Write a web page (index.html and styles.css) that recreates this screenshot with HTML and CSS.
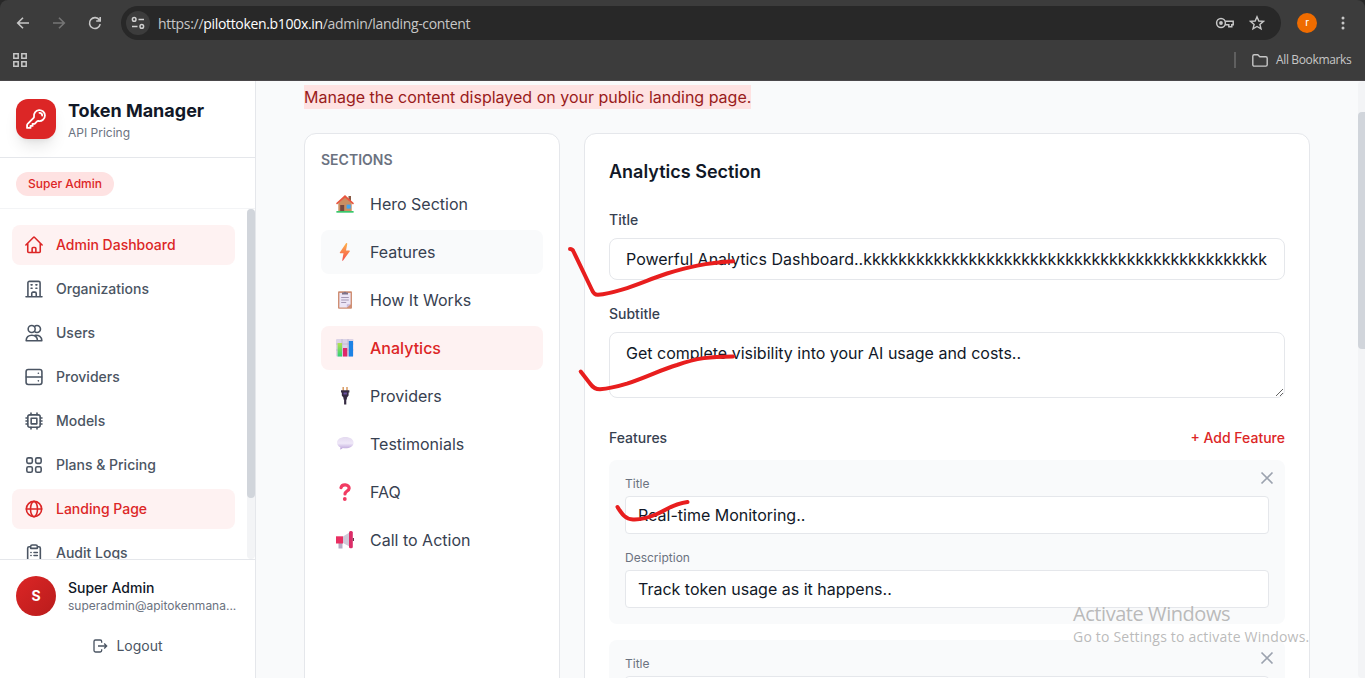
FILE: index.html
```html
<!DOCTYPE html>
<html lang="en">
<head>
<meta charset="utf-8">
<title>Token Manager</title>
<link rel="stylesheet" href="styles.css">
</head>
<body>
<div class="browser">
  <div class="toolbar">
    <svg class="nav-btn" viewBox="0 0 16 16"><path d="M14 8H3M8 2.7 2.7 8 8 13.3"/></svg>
    <svg class="nav-btn off" viewBox="0 0 16 16"><path d="M2 8h11M8 2.7 13.3 8 8 13.3"/></svg>
    <svg class="nav-btn" viewBox="0 0 16 16"><path d="M13.2 9.2A5.4 5.4 0 1 1 12.4 5M13.2 2v4H9.2"/></svg>
    <div class="address">
      <span class="site-info"><svg viewBox="0 0 16 16"><circle cx="4.2" cy="4.4" r="1.8"/><path d="M8.5 4.4H14M2 11.4h5.5"/><circle cx="11.8" cy="11.4" r="1.8"/></svg></span>
      <span class="url">https://<b>pilottoken.b100x.in</b>/admin/landing-content</span>
      <svg class="key" viewBox="0 0 20 14"><circle cx="6" cy="7" r="4.4"/><circle class="dot" cx="6" cy="7" r="1.9"/><path d="M10.2 5.2h8v3.6h-1.4v2h-3v-2h-3.6"/></svg>
      <svg class="star" viewBox="0 0 16 16"><path d="m8 1.8 1.8 4.2 4.6.4-3.5 3 1.1 4.5L8 11.5l-4 2.4 1.1-4.5-3.5-3 4.6-.4z"/></svg>
    </div>
    <span class="profile">r</span>
    <svg class="dots" viewBox="0 0 4 16"><circle cx="2" cy="3" r="1.5"/><circle cx="2" cy="8" r="1.5"/><circle cx="2" cy="13" r="1.5"/></svg>
  </div>
  <div class="bookmarks">
    <svg class="apps" viewBox="0 0 14 14"><path d="M.8.8h4.4v4.4H.8zM8.8.8h4.4v4.4H8.8zM.8 8.8h4.4v4.4H.8zM8.8 8.8h4.4v4.4H8.8z"/></svg>
    <span class="divider"></span>
    <svg class="folder" viewBox="0 0 16 13"><path d="M.8 10.7V2.3C.8 1.4 1.4.8 2.2.8h3.6l2 2h6c.8 0 1.4.6 1.4 1.4v6.5c0 .8-.6 1.4-1.4 1.4H2.2c-.8 0-1.4-.6-1.4-1.4z"/></svg>
    <span class="all">All Bookmarks</span>
  </div>
</div>

<div class="app">
  <aside class="sidebar">
    <div class="brand">
      <div class="logo"><svg viewBox="0 0 24 24"><path d="M15.75 5.25a3 3 0 0 1 3 3m3 0a6 6 0 0 1-7.029 5.912c-.563-.097-1.159.026-1.563.43L10.5 17.25H8.25v2.25H6v2.25H2.25v-2.818c0-.597.237-1.17.659-1.591l6.499-6.499c.404-.404.527-1 .43-1.563A6 6 0 1 1 21.75 8.25Z"/></svg></div>
      <div><div class="brand-name">Token Manager</div><div class="brand-sub">API Pricing</div></div>
    </div>
    <div class="role"><span class="badge">Super Admin</span></div>
    <div class="nav-wrap">
      <nav class="nav">
        <a class="item active"><svg viewBox="0 0 24 24"><path d="m2.25 12 8.954-8.955c.44-.439 1.152-.439 1.591 0L21.75 12M4.5 9.75v10.125c0 .621.504 1.125 1.125 1.125H9.75v-4.875c0-.621.504-1.125 1.125-1.125h2.25c.621 0 1.125.504 1.125 1.125V21h4.125c.621 0 1.125-.504 1.125-1.125V9.75M8.25 21h8.25"/></svg>Admin Dashboard</a>
        <a class="item"><svg viewBox="0 0 24 24"><path d="M2.4 21.2h19.2M4.7 21V4.6c0-1 .8-1.8 1.8-1.8h11c1 0 1.8.8 1.8 1.8V21M8.5 7h1.2M14.3 7h1.2M8.5 11h1.2M14.3 11h1.2M9.3 21v-3.6c0-1 .7-1.7 1.6-1.7h2.2c.9 0 1.6.7 1.6 1.7V21"/></svg>Organizations</a>
        <a class="item"><svg viewBox="0 0 24 24"><circle cx="9.2" cy="7.2" r="4.2"/><path d="M12.6 4.3a4.2 4.2 0 1 1 0 5.9M2.6 21.2c0-4 2.8-6.6 6.8-6.6s6.8 2.6 6.8 6.6zM13.4 14.8c4.4-.8 8 2.2 8 6.4h-5"/></svg>Users</a>
        <a class="item"><svg viewBox="0 0 24 24"><rect x="2.5" y="3" width="19" height="18" rx="2.6"/><path d="M2.8 12h18.4M17.2 7.4h.1M17.2 16.6h.1"/></svg>Providers</a>
        <a class="item"><svg viewBox="0 0 24 24"><rect x="4.6" y="4.6" width="14.8" height="14.8" rx="2.4"/><rect x="8.6" y="8.6" width="6.8" height="6.8"/><path d="M8.4 2.4v2M15.6 2.4v2M8.4 19.6v2M15.6 19.6v2M2.4 8.4h2M2.4 15.6h2M19.6 8.4h2M19.6 15.6h2M2.4 12h2M19.6 12h2"/></svg>Models</a>
        <a class="item"><svg viewBox="0 0 24 24"><rect x="3.4" y="3.4" width="6.6" height="6.6" rx="1.8"/><rect x="14" y="3.4" width="6.6" height="6.6" rx="1.8"/><rect x="3.4" y="14" width="6.6" height="6.6" rx="1.8"/><rect x="14" y="14" width="6.6" height="6.6" rx="1.8"/></svg>Plans &amp; Pricing</a>
        <a class="item active"><svg viewBox="0 0 24 24"><circle cx="12" cy="12" r="9.2"/><ellipse cx="12" cy="12" rx="4.2" ry="9.2"/><path d="M2.8 12h18.4"/></svg>Landing Page</a>
        <a class="item"><svg viewBox="0 0 24 24"><path d="M8 4.4H6.2c-1 0-1.8.8-1.8 1.8v13.6c0 1 .8 1.8 1.8 1.8h11.6c1 0 1.8-.8 1.8-1.8V6.2c0-1-.8-1.8-1.8-1.8H16M8 6.4V4.2c0-1 .8-1.8 1.8-1.8h4.4c1 0 1.8.8 1.8 1.8v2.2zM8.3 11.4h.2M12 11.4h4M8.3 15h.2M12 15h4"/></svg>Audit Logs</a>
      </nav>
      <div class="nav-track"><div class="nav-thumb"></div></div>
    </div>
    <div class="account">
      <div class="user">
        <div class="avatar">S</div>
        <div class="user-text"><div class="user-name">Super Admin</div><div class="user-mail">superadmin@apitokenmana...</div></div>
      </div>
      <div class="logout"><svg viewBox="0 0 24 24"><path d="M14.5 7V5.2c0-1.3-1-2.2-2.2-2.2H5.2C4 3 3 4 3 5.2v13.6C3 20 4 21 5.2 21h7.1c1.2 0 2.2-1 2.2-2.2V17M9 12h13M18.3 8.2 22 12l-3.7 3.8"/></svg>Logout</div>
    </div>
  </aside>

  <main class="main">
    <p class="intro"><span>Manage the content displayed on your public landing page.</span></p>
    <div class="columns">
      <section class="card sections">
        <h3>SECTIONS</h3>
        <a class="sec"><svg viewBox="0 0 18 18"><path fill="#8a5a45" d="M12.5 1H15v5h-2.500z"/><path fill="#c98f62" d="M2.300 8 9 2l6.700 6v9H2.300z"/><path fill="#e8563f" d="M9 0 0 8.200l1 1.200L9 2.800l8 6.600 1-1.200z"/><path fill="#76483f" d="M4.200 10h4v7h-4z"/><path fill="#40a6ef" d="M10.600 9.600h4.200v4h-4.200z"/><path fill="#38c76b" d="M.4 16h17.200v1.700H.4z"/></svg>Hero Section</a>
        <a class="sec hover"><svg viewBox="0 0 18 18"><defs><linearGradient id="bolt" x2="0" y2="1"><stop stop-color="#ffb24c"/><stop offset="1" stop-color="#f4504c"/></linearGradient></defs><path fill="url(#bolt)" d="M10 .3 3.800 9.400c-.2.400 0 .8.400.8h3.300L6.200 17.500c0 .4.400.5.700.2l6.800-9.300c.3-.4.100-.9-.4-.9H10L11.300.8C11.400.2 10.400-.2 10 .3z"/></svg>Features</a>
        <a class="sec"><svg viewBox="0 0 18 18"><rect x="2" y=".3" width="14" height="17.500" rx="1" fill="#cf8f74"/><path fill="#ece5f5" d="M3.400 2h11.200v11.200l-3.800 3.400H3.400z"/><path fill="#c9b9dc" d="M14.600 13.200h-3.800v3.400z"/><path fill="#7d7188" d="M6 3.600V1.600h1.800a1.300 1.300 0 0 1 2.400 0H12v2z"/><path stroke="#a497b3" d="M5.200 6.500h7.600M5.200 9h7.600M5.200 11.500h5"/></svg>How It Works</a>
        <a class="sec current"><svg viewBox="0 0 18 18"><defs><linearGradient id="bar" x2="0" y2="1"><stop stop-color="#b4e34c"/><stop offset="1" stop-color="#2fcf78"/></linearGradient></defs><rect width="17.500" height="17.500" rx="1" fill="#dbd3e6"/><path stroke="#b7adc6" stroke-width=".6" d="M0 5h17.500M0 11h17.500M6 0v17.500M12 0v17.500"/><path fill="url(#bar)" d="M1.600 4H6v13.500H1.600z"/><path fill="#df2869" d="M7 9h4.200v8.500H7z"/><path fill="#1d83e5" d="M12.800 2H17v15.500h-4.200z"/></svg>Analytics</a>
        <a class="sec"><svg viewBox="0 0 18 18"><path stroke="#d99b62" stroke-width="1.500" d="M7.200 0v4M11 0v4"/><path fill="#352b42" d="M5 3.200h8.400v2.300h-.8v3l-1.700 2.300v1.700h-.6v5H8.100v-5h-.6v-1.700L5.800 8.500v-3H5z"/><path stroke="#6b52a0" stroke-width="2" d="M7.500 6.500h3.400"/></svg>Providers</a>
        <a class="sec"><svg viewBox="0 0 18 18"><defs><linearGradient id="talk" x2="0" y2="1"><stop stop-color="#e4daf0"/><stop offset=".5" stop-color="#efe8f8"/><stop offset="1" stop-color="#b9a0d8"/></linearGradient></defs><path fill="url(#talk)" d="M9.300 2c4.800 0 8.300 2.400 8.300 5.700s-3.500 5.600-8.300 5.600c-.9 0-1.700-.1-2.500-.2-.6.700-1.600 1.400-2.900 1.500.5-.7.500-1.500.4-2.300C2.300 11.200 1 9.600 1 7.700 1 4.400 4.500 2 9.300 2z"/></svg>Testimonials</a>
        <a class="sec"><svg viewBox="0 0 18 18"><path fill="none" stroke="#f13b62" stroke-width="3.200" stroke-linecap="round" d="M5 4.700C5.400 2.500 7.400 1.700 9.300 1.800c2.200.1 3.900 1.500 3.800 3.500-.1 2.700-4.100 2.700-4.100 5.600"/><circle cx="8.800" cy="16" r="1.900" fill="#f13b62"/></svg>FAQ</a>
        <a class="sec"><svg viewBox="0 0 18 18"><path fill="#b4abc4" d="M2.500 11h4v6.500h-4z"/><path fill="#cfc9d8" d="m7 5.500 6.500-4v14L7 12z"/><path fill="#e92f62" d="M0 5.300h7v7.200H0z"/><rect x="13" y="0" width="3.800" height="17.300" rx="1.500" fill="#dc2c68"/><path fill="#6b3750" d="M16.800 7h1.200v3h-1.200z"/></svg>Call to Action</a>
      </section>

      <section class="card editor">
        <h2>Analytics Section</h2>
        <label class="lbl">Title</label>
        <input class="field" value="Powerful Analytics Dashboard..kkkkkkkkkkkkkkkkkkkkkkkkkkkkkkkkkkkkkkkkkkkkkk">
        <label class="lbl next">Subtitle</label>
        <textarea class="field area" rows="2">Get complete visibility into your AI usage and costs..</textarea>
        <div class="feat-head"><span>Features</span><span class="add">+ Add Feature</span></div>
        <div class="feature">
          <svg class="close" viewBox="0 0 20 20"><path d="m4.500 4.500 11 11m0-11-11 11"/></svg>
          <label>Title</label><input value="Real-time Monitoring..">
          <label class="second">Description</label><input value="Track token usage as it happens..">
        </div>
        <div class="feature">
          <svg class="close" viewBox="0 0 20 20"><path d="m4.500 4.500 11 11m0-11-11 11"/></svg>
          <label>Title</label><input value="">
        </div>
      </section>
    </div>
  </main>
  <div class="page-track"><div class="page-thumb"></div></div>
</div>

<svg class="ink" viewBox="0 0 1365 678"><path d="M570 249Q572.500 249 573.500 251.500L592 290Q594 295 598 294.800Q607 294 622 289.600C640 284 650 279 667 273.500C688 267 705 263 733 261.300"/><path d="M580.700 371.500 590 383.500Q594 389.300 600 389.300Q611 388.500 627 383.700C650 376 660 370 677 365C697 358 710 356.500 733 356.500"/><path d="M617.500 507C622 514 625 519 633 519.500C642 520 650 517 657 514C668 509 674 503.500 687.500 502"/></svg>
<div class="watermark"><div class="wm-title">Activate Windows</div><div class="wm-sub">Go to Settings to activate Windows.</div></div>
</body>
</html>
```
FILE: styles.css
```css
* { box-sizing: border-box; }
body { margin: 0; width: 1365px; height: 678px; overflow: hidden; background: #282828; font-family: Inter, "Liberation Sans", sans-serif; color: #111827; }
svg { display: block; flex: none; fill: none; }

.browser { height: 81px; background: #3c3c3c; border-bottom: 1px solid #4a474a; border-radius: 8px 8px 0 0; font-family: "Open Sans", "Noto Sans", sans-serif; color: #c7c7c7; }
.toolbar { display: flex; align-items: center; height: 40px; padding: 6px 20px 0 15px; }
.nav-btn { width: 16px; height: 16px; margin-right: 20px; stroke: #c7c7c7; stroke-width: 1.6; }
.nav-btn.off { stroke: #757575; }
.address { display: flex; align-items: center; width: 1160px; height: 34px; margin-left: -2px; padding: 0 16px 0 5px; border-radius: 17px; background: #282828; }
.site-info { display: flex; align-items: center; justify-content: center; width: 24px; height: 24px; border-radius: 50%; background: #3c3c3c; }
.site-info svg { width: 16px; height: 16px; stroke: #d0d0d0; stroke-width: 1.5; }
.url { flex: 1; margin-left: 8px; font-size: 14px; letter-spacing: -0.32px; white-space: nowrap; }
.url b { font-weight: 400; color: #fff; }
.key { width: 20px; height: 14px; margin-right: 14px; stroke: #c7c7c7; stroke-width: 1.5; }
.key .dot { fill: #c7c7c7; stroke: none; }
.star { width: 16px; height: 16px; stroke: #c7c7c7; stroke-width: 1.4; }
.profile { width: 20px; height: 20px; margin-left: 16px; border-radius: 50%; background: #ef6c00; color: #fff; font: 11px/19px Roboto, sans-serif; text-align: center; }
.dots { width: 4px; height: 16px; margin-left: 24px; fill: #c7c7c7; }
.bookmarks { display: flex; align-items: center; height: 40px; padding: 0 13px; }
.apps { width: 14px; height: 14px; stroke: #c7c7c7; stroke-width: 1.5; }
.divider { width: 2px; height: 16px; margin-left: auto; background: #5f5f5f; }
.folder { width: 16px; height: 13px; margin: 0 8px 0 16px; stroke: #c7c7c7; stroke-width: 1.4; }
.all { width: 76px; font-size: 12px; line-height: 16px; letter-spacing: -0.36px; white-space: nowrap; }

.app { display: flex; height: 597px; background: #f9fafb; }
.sidebar { display: flex; flex-direction: column; width: 256px; flex: none; background: #fff; border-right: 1px solid #e5e7eb; }
.brand { display: flex; flex: none; align-items: center; gap: 12px; height: 77px; padding: 0 16px; border-bottom: 1px solid #e5e7eb; }
.logo { display: flex; align-items: center; justify-content: center; width: 40px; height: 40px; border-radius: 12px; background: #dc2626; box-shadow: 0 10px 15px -3px #0000001a, 0 4px 6px -4px #0000001a; }
.logo svg { width: 22px; height: 22px; stroke: #fff; stroke-width: 2; stroke-linejoin: round; stroke-linecap: round; }
.brand-name { font-size: 18px; line-height: 28px; font-weight: 700; }
.brand-sub { font-size: 12px; line-height: 16px; color: #6b7280; }
.role { display: flex; flex: none; height: 51px; padding: 14px 16px 0; border-bottom: 1px solid #f3f4f6; }
.badge { height: 24px; padding: 4px 12px; border-radius: 12px; background: #fee2e2; color: #dc2626; font-size: 12px; line-height: 16px; font-weight: 500; }
.nav-wrap { display: flex; flex: none; height: 350px; overflow: hidden; }
.nav { display: flex; flex-direction: column; gap: 4px; flex: 1; padding: 16px 12px; }
.item { display: flex; flex: none; align-items: center; gap: 12px; height: 40px; padding: 0 12px; border-radius: 8px; font-size: 14px; line-height: 20px; font-weight: 500; color: #4b5563; }
.item svg { width: 20px; height: 20px; stroke: currentColor; stroke-width: 1.9; stroke-linecap: round; stroke-linejoin: round; }
.item.active { background: #fef2f2; color: #dc2626; }
.nav-track { width: 8px; border-radius: 4px; background: #f3f4f6; }
.nav-thumb { height: 289px; border-radius: 4px; background: #d1d5db; }
.account { flex: 1; padding: 16px; border-top: 1px solid #e5e7eb; }
.user { display: flex; align-items: center; gap: 12px; }
.avatar { flex: none; width: 40px; height: 40px; border-radius: 50%; background: linear-gradient(135deg, #dc2626, #b91c1c); color: #fff; font-size: 14px; line-height: 40px; font-weight: 700; text-align: center; }
.user-name { font-size: 14px; line-height: 20px; font-weight: 500; }
.user-mail { font-size: 12px; line-height: 16px; color: #6b7280; white-space: nowrap; }
.logout { display: flex; align-items: center; justify-content: center; gap: 8px; height: 36px; margin-top: 12px; font-size: 14px; line-height: 20px; color: #4b5563; }
.logout svg { width: 16px; height: 16px; stroke: currentColor; stroke-width: 2; }

.main { flex: 1; padding: 4px 48px 0; overflow: hidden; }
.intro { margin: 0 0 24px; font-size: 16px; line-height: 24px; color: #991b1b; }
.intro span { display: inline-block; background: #fee2e2; }
.columns { display: flex; gap: 24px; }
.card { height: 700px; background: #fff; border: 1px solid #e5e7eb; border-radius: 12px; }
.sections { display: flex; flex-direction: column; gap: 4px; width: 256px; padding: 16px; }
.sections h3 { margin: 0 0 8px; font-size: 14px; line-height: 20px; font-weight: 600; color: #6b7280; }
.sec { display: flex; flex: none; align-items: center; gap: 16px; height: 44px; padding: 0 15px; border-radius: 8px; font-size: 16px; color: #374151; }
.sec svg { width: 18px; height: 18px; }
.sec.hover { background: #f9fafb; }
.sec.current { background: #fef2f2; color: #dc2626; font-weight: 500; }

.editor { width: 726px; padding: 24px; }
.editor h2 { margin: 0 0 24px; font-size: 18px; line-height: 28px; font-weight: 600; }
.lbl { display: block; margin-bottom: 8px; font-size: 14px; line-height: 20px; font-weight: 500; color: #374151; }
.lbl.next { margin-top: 24px; }
.field { display: block; width: 100%; height: 42px; padding: 8px 16px; border: 1px solid #e5e7eb; border-radius: 8px; outline: 0; background: #fff; font: 16px/24px Inter, sans-serif; color: #111827; }
.area { height: 66px; overflow: hidden; resize: vertical; }
.feat-head { display: flex; justify-content: space-between; margin: 30px 0 12px; font-size: 14px; line-height: 20px; font-weight: 500; color: #374151; }
.add { color: #dc2626; }
.feature { position: relative; margin-bottom: 16px; padding: 16px; border-radius: 8px; background: #f9fafb; }
.feature label { display: block; margin-bottom: 4px; font-size: 12px; line-height: 16px; color: #6b7280; }
.feature .second { margin-top: 16px; }
.feature input { display: block; width: 100%; height: 38px; padding: 6px 12px; border: 1px solid #e5e7eb; border-radius: 4px; background: #fff; font: 16px/24px Inter, sans-serif; color: #111827; }
.close { position: absolute; top: 8px; right: 8px; width: 20px; height: 20px; stroke: #9ca3af; stroke-width: 1.7; }
.page-track { width: 7px; padding-top: 31px; background: #f3f4f6; border-radius: 4px 0 0 4px; }
.page-thumb { height: 237px; border-radius: 4px 0 0 4px; background: #d1d5db; }

.ink { position: absolute; left: 0; top: 0; width: 1365px; height: 678px; stroke: #e81e1e; stroke-width: 4; stroke-linecap: round; stroke-linejoin: round; }
.watermark { position: absolute; left: 1073px; top: 601px; font-family: "Open Sans", "Noto Sans", sans-serif; color: #a9a9a9cc; white-space: nowrap; }
.wm-title { font-size: 20px; line-height: 26px; letter-spacing: -0.44px; }
.wm-sub { margin-top: 1px; font-size: 14px; line-height: 18px; letter-spacing: 0.2px; }
```
